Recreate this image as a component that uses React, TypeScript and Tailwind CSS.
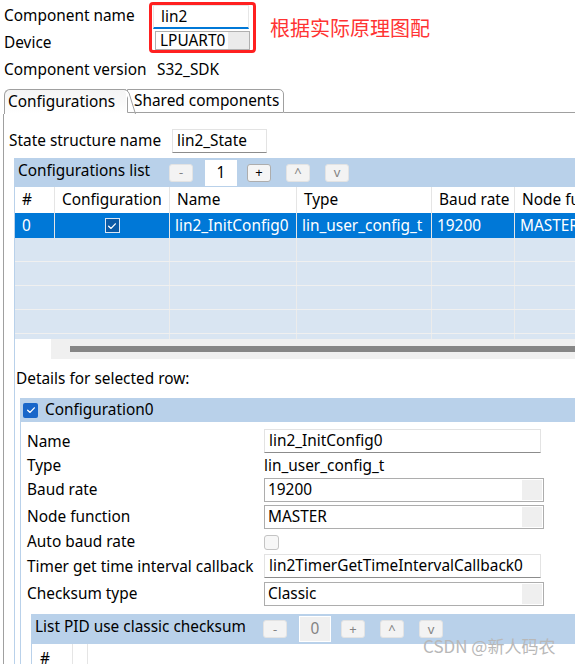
import React from "react";

const BLUE_HEAD = "bg-[#b9d1ea]";

function SmallBtn({ label, enabled = false }: { label: string; enabled?: boolean }) {
  return (
    <div
      className={`flex h-[18px] w-[24px] items-center justify-center rounded-[3px] border text-[13px] leading-none ${
        enabled ? "border-[#adadad] bg-[#f5f5f5] text-black" : "border-[#e3e3e3] bg-[#f3f3f3] text-[#838383]"
      }`}
    >
      {label}
    </div>
  );
}

function CheckMark({ className }: { className?: string }) {
  return (
    <svg viewBox="0 0 10 10" className={className} fill="none">
      <path d="M2.2 5.2 L4.2 7 L7.8 3.2" stroke="white" strokeWidth="1.1" strokeLinecap="round" strokeLinejoin="round" />
    </svg>
  );
}

function Select({ value }: { value: string }) {
  return (
    <div className="flex h-[24px] w-[280px] items-center border border-[#adadad] bg-white pl-[3px]">
      <span className="flex-1">{value}</span>
      <div className="mr-[1px] h-[20px] w-[20px] bg-[#efefef]" />
    </div>
  );
}

function TextInput({ value, w = "w-[277px]" }: { value: string; w?: string }) {
  return (
    <div className={`flex h-[24px] ${w} items-center border border-[#e3e3e3] border-b-[#8c8c8c] bg-white pl-[4px]`}>
      {value}
    </div>
  );
}

const cols = [
  { label: "#", w: "w-[40px]" },
  { label: "Configuration", w: "w-[115px]" },
  { label: "Name", w: "w-[127px]" },
  { label: "Type", w: "w-[135px]" },
  { label: "Baud rate", w: "w-[83px]" },
  { label: "Node function", w: "w-[120px]" },
];

export default function App() {
  return (
    <div className="relative h-[664px] w-[575px] overflow-hidden bg-white text-[15.4px] leading-none text-black [font-family:'Noto_Sans',sans-serif]">
      {/* header fields */}
      <div className="flex pl-[4px] pt-[2px]">
        <div className="flex w-[145px] flex-col">
          <div className="flex h-[28px] items-center">Component name</div>
          <div className="flex h-[26px] items-center">Device</div>
        </div>
        <div className="flex h-[51px] w-[107px] flex-col rounded-[4px] border-[3px] border-[#ff2020] pl-[1px] pt-[0px]">
          <div className="flex h-[24px] w-[96px] items-center border border-[#e6e6e6] border-b-2 border-b-[#0078d7] bg-white pl-[7px]">lin2</div>
          <div className="mt-[2px] ml-[2px] flex h-[19px] w-[95px] items-center border border-[#b0b0b0] bg-white pl-[4px]">
            <span className="flex-1">LPUART0</span>
            <div className="h-[17px] w-[21px] bg-[#ebebeb]" />
          </div>
        </div>
        <div className="ml-[14px] flex h-[51px] items-center text-[20px] text-[#f33] [font-family:'Noto_Sans_CJK_SC',sans-serif]">
          根据实际原理图配
        </div>
      </div>
      <div className="flex h-[28px] items-center pl-[4px]">
        <span className="w-[153px]">Component version</span>
        <span>S32_SDK</span>
      </div>

      {/* tabs */}
      <div className="mt-[5px] flex h-[25px] pl-[4px]">
        <div className="relative flex h-[25px] w-[122px] items-center rounded-tl-[6px] border-l border-t border-[#a0a0a0] bg-gradient-to-b from-[#f4f4f4] to-white pl-[3px]">
          Configurations
          <svg className="absolute -right-[10px] top-[-1px] h-[25px] w-[12px]" viewBox="0 0 12 25">
            <path d="M0 0.5 Q3 0.5 5 4 L11.5 25" stroke="#a0a0a0" fill="white" />
          </svg>
        </div>
        <div className="flex h-[25px] flex-1 items-start">
          <div className="ml-[1px] flex h-[24px] w-[157px] items-center rounded-tr-[5px] border border-[#a0a0a0] bg-white pl-[6px]">
            Shared components
          </div>
          <div className="h-[24px] flex-1 border-b border-[#a0a0a0]" />
        </div>
      </div>

      {/* panel */}
      <div className="ml-[3px] flex h-[560px] flex-col border-l border-[#a0a0a0]">
        <div className="mt-[14px] flex h-[26px] items-center pl-[5px]">
          <span className="w-[163px]">State structure name</span>
          <TextInput value="lin2_State" w="w-[95px]" />
        </div>

        {/* configurations list group */}
        <div className="ml-[10px] mt-[5px] flex flex-1 flex-col border-l border-[#b9d1ea]">
          <div className={`flex h-[29px] items-center ${BLUE_HEAD} pl-[3px]`}>
            <span className="w-[151px] -mt-[4px]">Configurations list</span>
            <SmallBtn label="-" />
            <div className="ml-[12px] flex h-[26px] w-[32px] items-center justify-center bg-white">1</div>
            <div className="ml-[10px]"><SmallBtn label="+" enabled /></div>
            <div className="ml-[15px]"><SmallBtn label="^" /></div>
            <div className="ml-[15px]"><SmallBtn label="v" /></div>
          </div>

          {/* table */}
          <div className="h-[152px] overflow-hidden">
            <div className="flex h-[26px] bg-white">
              {cols.map((c, i) => (
                <div key={i} className={`${c.w} flex shrink-0 items-center border-r border-[#e5e5e5] pl-[7px]`}>
                  {c.label}
                </div>
              ))}
            </div>
            <div className="flex h-[25px] bg-[#0078d7] text-white">
              <div className="flex w-[40px] shrink-0 items-center border-r border-[#e5e5e5] pl-[7px]">0</div>
              <div className="flex w-[115px] shrink-0 items-center justify-center border-r border-[#e5e5e5]">
                <div className="flex h-[15px] w-[15px] items-center justify-center border border-[#dbe7f4] bg-[#0b5aa6]">
                  <CheckMark className="h-[12px] w-[12px]" />
                </div>
              </div>
              <div className="flex w-[127px] shrink-0 items-center border-r border-[#e5e5e5] pl-[5px]">lin2_InitConfig0</div>
              <div className="flex w-[135px] shrink-0 items-center border-r border-[#e5e5e5] pl-[5px]">lin_user_config_t</div>
              <div className="flex w-[83px] shrink-0 items-center border-r border-[#e5e5e5] pl-[5px]">19200</div>
              <div className="flex w-[120px] shrink-0 items-center pl-[5px]">MASTER</div>
            </div>
            {[0, 1, 2, 3, 4].map((r) => (
              <div key={r} className="flex h-[24px] border-b border-[#f0f0f0] bg-[#d9e5f2]">
                <div className="w-[155px] shrink-0 border-r border-[#ececec]" />
                <div className="w-[127px] shrink-0 border-r border-[#ececec]" />
                <div className="w-[135px] shrink-0 border-r border-[#ececec]" />
                <div className="w-[83px] shrink-0 border-r border-[#ececec]" />
                <div className="flex-1" />
              </div>
            ))}
          </div>
          {/* scrollbar */}
          <div className="flex h-[20px] pl-[36px]">
            <div className="flex flex-1 items-center bg-[#f0f0f0] pl-[19px]">
              <div className="h-[6px] flex-1 bg-[#868686]" />
            </div>
          </div>

          <div className="flex h-[39px] items-center pl-[1px]">Details for selected row:</div>

          {/* Configuration0 group */}
          <div className="ml-[5px] flex flex-1 flex-col border-l border-[#b9d1ea]">
            <div className={`flex h-[24px] items-center ${BLUE_HEAD} pl-[2px]`}>
              <div className="flex h-[15px] w-[15px] items-center justify-center rounded-[2px] bg-[#1866c9]">
                <CheckMark className="h-[12px] w-[12px]" />
              </div>
              <span className="ml-[7px]">Configuration0</span>
            </div>
            <div className="flex flex-col pl-[6px] pt-[7px]">
              <div className="flex h-[25px]">
                <span className="flex w-[237px] items-center">Name</span>
                <TextInput value="lin2_InitConfig0" />
              </div>
              <div className="flex h-[24px] items-center">
                <span className="w-[237px]">Type</span>
                <span>lin_user_config_t</span>
              </div>
              <div className="flex h-[27px]">
                <span className="flex h-[24px] w-[237px] items-center">Baud rate</span>
                <Select value="19200" />
              </div>
              <div className="flex h-[25px]">
                <span className="flex h-[24px] w-[237px] items-center">Node function</span>
                <Select value="MASTER" />
              </div>
              <div className="flex h-[24px] items-center">
                <span className="w-[237px]">Auto baud rate</span>
                <div className="h-[15px] w-[15px] rounded-[3px] border border-[#c4c4c4] bg-[#f7f7f7]" />
              </div>
              <div className="flex h-[28px]">
                <span className="flex h-[25px] w-[237px] items-center">Timer get time interval callback</span>
                <TextInput value="lin2TimerGetTimeIntervalCallback0" />
              </div>
              <div className="flex h-[32px]">
                <span className="flex h-[24px] w-[237px] items-center">Checksum type</span>
                <Select value="Classic" />
              </div>
            </div>

            {/* List PID group */}
            <div className="ml-[10px] flex flex-1 flex-col border-l border-[#b9d1ea]">
              <div className={`flex h-[30px] items-center ${BLUE_HEAD} pl-[3px]`}>
                <span className="-mt-[4px] w-[228px]">List PID use classic checksum</span>
                <SmallBtn label="-" />
                <div className="ml-[12px] flex h-[26px] w-[32px] items-center justify-center border border-white bg-[#f0f0f0] text-[#838383]">0</div>
                <div className="ml-[10px]"><SmallBtn label="+" /></div>
                <div className="ml-[15px]"><SmallBtn label="^" /></div>
                <div className="ml-[15px]"><SmallBtn label="v" /></div>
              </div>
              <div className="flex h-[30px] bg-white">
                <div className="flex w-[41px] items-center border-r border-[#e5e5e5] pl-[8px]">#</div>
                <div className="w-[15px] border-r border-[#e5e5e5]" />
              </div>
            </div>
          </div>
        </div>
      </div>

      {/* watermark */}
      <div className="absolute left-[423px] top-[637px] text-[17px] text-[#b8b8b8] [font-family:'Noto_Sans_CJK_SC',sans-serif]">
        CSDN @新人码农
      </div>
    </div>
  );
}
